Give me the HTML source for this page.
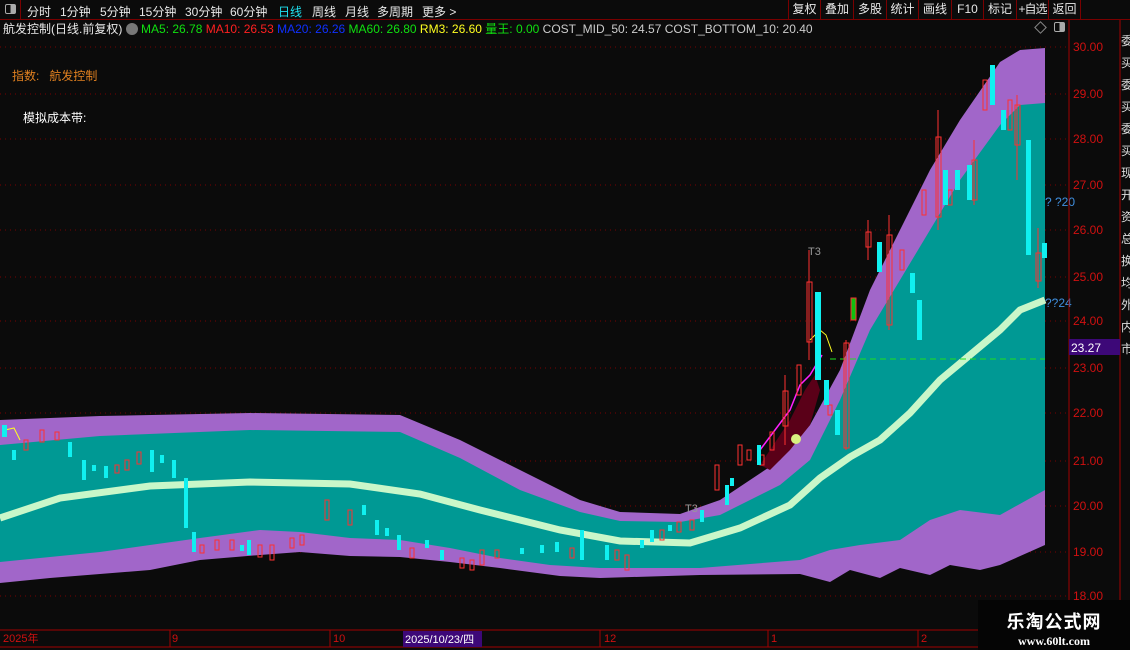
<!DOCTYPE html>
<html><head><meta charset="utf-8"><style>
*{margin:0;padding:0;box-sizing:border-box}
body{width:1130px;height:650px;background:#0b0b0b;overflow:hidden;position:relative;font-family:"Liberation Sans","Noto Sans CJK SC",sans-serif;color:#ddd}
.top{position:absolute;left:0;top:0;width:1130px;height:20px;border-bottom:1px solid #7a0000;font-size:12px}
.top span{position:absolute;top:3px;color:#e8e8e8;white-space:nowrap}
.btn{position:absolute;top:0;height:19px;border-left:1px solid #7a0000;color:#e8e8e8;font-size:12px;text-align:center;line-height:19px;white-space:nowrap;overflow:hidden}
.l2{position:absolute;top:20px;left:3px;font-size:12px;white-space:nowrap;line-height:18px}
</style></head><body>
<div class="top">
<div style="position:absolute;left:0;top:0;width:21px;height:19px;border-right:1px solid #7a0000"><div style="position:absolute;left:5px;top:4px;width:11px;height:10px;border:1px solid #aaa;border-radius:2px;background:linear-gradient(90deg,#0b0b0b 50%,#aaa 50%)"></div></div>
<span style="left:27px">分时</span><span style="left:60px">1分钟</span><span style="left:100px">5分钟</span><span style="left:139px">15分钟</span><span style="left:185px">30分钟</span><span style="left:230px">60分钟</span><span style="left:278px;color:#1ee0f0">日线</span><span style="left:312px">周线</span><span style="left:345px">月线</span><span style="left:377px">多周期</span><span style="left:422px">更多 &gt;</span>
<div class="btn" style="left:788px;width:32px">复权</div><div class="btn" style="left:820px;width:33px">叠加</div><div class="btn" style="left:853px;width:33px">多股</div><div class="btn" style="left:886px;width:32px">统计</div><div class="btn" style="left:918px;width:33px">画线</div><div class="btn" style="left:951px;width:32px">F10</div><div class="btn" style="left:983px;width:33px">标记</div><div class="btn" style="left:1016px;width:32px;letter-spacing:-1px">+自选</div><div class="btn" style="left:1048px;width:32px">返回</div><div class="btn" style="left:1080px;width:1px"></div>
</div>
<div class="l2"><span style="color:#e8e8e8">航发控制(日线.前复权)</span> <span style="display:inline-block;width:12px;height:12px;border-radius:6px;background:#777;vertical-align:-2px"></span> <span style="color:#10e010">MA5: 26.78</span> <span style="color:#ff2020">MA10: 26.53</span> <span style="color:#1030ff">MA20: 26.26</span> <span style="color:#10e010">MA60: 26.80</span> <span style="color:#ffff20">RM3: 26.60</span> <span style="color:#10e010">量王: 0.00</span> <span style="color:#ccc">COST_MID_50: 24.57 COST_BOTTOM_10: 20.40</span></div>
<div style="position:absolute;left:1036px;top:23px;width:9px;height:9px;border:1px solid #888;transform:rotate(45deg)"></div>
<div style="position:absolute;left:1054px;top:22px;width:11px;height:10px;border:1px solid #aaa;border-radius:2px;background:linear-gradient(90deg,#0b0b0b 50%,#aaa 50%)"></div>
<svg style="position:absolute;left:0;top:0" width="1130" height="650">
<g stroke="#7a0000" stroke-dasharray="1,4">
<line x1="0" y1="47" x2="1068" y2="47"/><line x1="0" y1="94" x2="1068" y2="94"/><line x1="0" y1="139" x2="1068" y2="139"/><line x1="0" y1="185" x2="1068" y2="185"/><line x1="0" y1="230" x2="1068" y2="230"/><line x1="0" y1="277" x2="1068" y2="277"/><line x1="0" y1="321" x2="1068" y2="321"/><line x1="0" y1="368" x2="1068" y2="368"/><line x1="0" y1="413" x2="1068" y2="413"/><line x1="0" y1="461" x2="1068" y2="461"/><line x1="0" y1="506" x2="1068" y2="506"/><line x1="0" y1="552" x2="1068" y2="552"/><line x1="0" y1="596" x2="1068" y2="596"/>
</g>
<polygon fill="#a166c9" points="0,420 100,416 250,413 400,415 460,440 520,470 580,500 620,512 680,514 720,500 780,460 810,425 840,370 870,290 900,230 930,170 960,120 1000,62 1020,50 1045,48 1045,545 1000,565 980,570 950,565 930,575 900,568 880,578 850,570 830,582 800,574 700,575 600,578 560,576 500,568 450,562 400,557 350,556 300,552 260,555 200,560 150,570 100,574 50,578 0,583"/>
<polygon fill="#009994" points="0,445 100,436 250,430 400,432 460,458 520,490 580,512 620,521 680,522 720,515 780,485 810,460 840,400 870,330 900,280 930,230 960,180 1000,125 1020,105 1045,103 1045,490 1000,515 960,510 930,520 900,540 860,545 830,550 800,560 700,568 600,568 550,565 500,558 450,548 400,540 350,538 300,532 260,530 200,538 150,545 100,552 50,557 0,562"/>
<polygon fill="#5a0018" points="760,465 790,420 805,390 815,375 820,390 810,425 790,450 770,470"/>
<polyline fill="none" stroke="#c9f7c9" stroke-width="7" points="0,518 60,498 150,486 250,482 350,484 420,494 480,510 560,530 620,541 690,543 740,528 790,505 820,478 850,457 880,440 910,413 940,380 970,355 1000,330 1020,310 1045,300"/>
<line x1="830" y1="359" x2="1045" y2="359" stroke="#20e020" stroke-dasharray="6,4"/>
<polyline fill="none" stroke="#ff20ff" stroke-width="1.5" points="760,450 775,430 790,410 800,385 810,375 822,355"/>
<polyline fill="none" stroke="#ffff20" points="810,340 820,330 826,335 832,352"/>
<polyline fill="none" stroke="#ffff20" points="5,430 14,428 20,440"/>
<g stroke="#ff3030" fill="none">
<rect x="783" y="391" width="5" height="35"/><line x1="785" y1="375" x2="785" y2="445"/>
<rect x="807" y="282" width="5" height="60"/><line x1="809" y1="250" x2="809" y2="360"/>
<rect x="844" y="343" width="5" height="105"/><line x1="846" y1="340" x2="846" y2="450"/>
<rect x="866" y="232" width="5" height="15"/><line x1="868" y1="220" x2="868" y2="260"/>
<rect x="887" y="235" width="5" height="90"/><line x1="889" y1="215" x2="889" y2="330"/>
<rect x="936" y="137" width="5" height="80"/><line x1="938" y1="110" x2="938" y2="230"/>
<rect x="972" y="160" width="5" height="40"/><line x1="974" y1="140" x2="974" y2="205"/>
<rect x="1015" y="105" width="5" height="40"/><line x1="1017" y1="95" x2="1017" y2="180"/>
<rect x="1036" y="253" width="5" height="28"/><line x1="1038" y1="228" x2="1038" y2="288"/>
<rect x="738" y="445" width="4" height="20"/><rect x="747" y="450" width="4" height="10"/><rect x="770" y="432" width="4" height="18"/>
<rect x="40" y="430" width="4" height="12"/><rect x="125" y="460" width="4" height="10"/><rect x="325" y="500" width="4" height="20"/><rect x="348" y="510" width="4" height="15"/><rect x="270" y="545" width="4" height="15"/><rect x="215" y="540" width="4" height="10"/><rect x="480" y="550" width="4" height="15"/><rect x="625" y="555" width="4" height="15"/><rect x="690" y="520" width="4" height="10"/><rect x="715" y="465" width="4" height="25"/>
<rect x="24" y="440" width="4" height="10"/><rect x="55" y="432" width="4" height="8"/><rect x="115" y="465" width="4" height="8"/><rect x="137" y="452" width="4" height="12"/><rect x="200" y="545" width="4" height="8"/><rect x="230" y="540" width="4" height="10"/><rect x="258" y="545" width="4" height="12"/><rect x="290" y="538" width="4" height="10"/><rect x="300" y="535" width="4" height="10"/><rect x="410" y="548" width="4" height="10"/><rect x="460" y="558" width="4" height="10"/><rect x="470" y="560" width="4" height="10"/><rect x="495" y="550" width="4" height="8"/><rect x="570" y="548" width="4" height="10"/><rect x="615" y="550" width="4" height="10"/><rect x="660" y="530" width="4" height="10"/><rect x="677" y="522" width="4" height="10"/><rect x="760" y="455" width="4" height="10"/><rect x="797" y="365" width="4" height="30"/><rect x="828" y="405" width="4" height="10"/><rect x="900" y="250" width="4" height="20"/><rect x="922" y="190" width="4" height="25"/><rect x="948" y="190" width="4" height="15"/><rect x="983" y="80" width="4" height="30"/><rect x="1008" y="100" width="4" height="30"/>
</g>
<g fill="#10f0f0">
<rect x="815" y="292" width="6" height="88"/><rect x="824" y="380" width="5" height="25"/><rect x="835" y="410" width="5" height="25"/><rect x="877" y="242" width="5" height="30"/><rect x="910" y="273" width="5" height="20"/><rect x="917" y="300" width="5" height="40"/><rect x="943" y="170" width="5" height="35"/><rect x="955" y="170" width="5" height="20"/><rect x="967" y="165" width="5" height="35"/><rect x="990" y="65" width="5" height="40"/><rect x="1001" y="110" width="5" height="20"/><rect x="1026" y="140" width="5" height="115"/><rect x="1042" y="243" width="5" height="15"/>
<rect x="2" y="425" width="5" height="12"/><rect x="68" y="442" width="4" height="15"/><rect x="82" y="460" width="4" height="20"/><rect x="104" y="466" width="4" height="12"/><rect x="150" y="450" width="4" height="22"/><rect x="172" y="460" width="4" height="18"/><rect x="184" y="478" width="4" height="50"/><rect x="192" y="532" width="4" height="20"/><rect x="247" y="540" width="4" height="15"/><rect x="375" y="520" width="4" height="15"/><rect x="397" y="535" width="4" height="15"/><rect x="440" y="550" width="4" height="10"/><rect x="580" y="530" width="4" height="30"/><rect x="605" y="545" width="4" height="15"/><rect x="650" y="530" width="4" height="12"/><rect x="700" y="510" width="4" height="12"/><rect x="725" y="485" width="4" height="20"/><rect x="757" y="445" width="4" height="20"/>
<rect x="12" y="450" width="4" height="10"/><rect x="92" y="465" width="4" height="6"/><rect x="160" y="455" width="4" height="8"/><rect x="240" y="545" width="4" height="6"/><rect x="362" y="505" width="4" height="10"/><rect x="385" y="528" width="4" height="8"/><rect x="425" y="540" width="4" height="8"/><rect x="520" y="548" width="4" height="6"/><rect x="540" y="545" width="4" height="8"/><rect x="555" y="542" width="4" height="10"/><rect x="640" y="540" width="4" height="8"/><rect x="668" y="525" width="4" height="6"/><rect x="730" y="478" width="4" height="8"/>
</g>
<rect x="851" y="298" width="5" height="22" fill="#10c010" stroke="#ff3030"/>
<circle cx="796" cy="439" r="5" fill="#d8f080"/>
<text x="808" y="255" fill="#999" font-size="11">T3</text>
<text x="685" y="512" fill="#999" font-size="11">T3</text>
<text x="1045" y="206" fill="#4090e0" font-size="12">? ?20</text>
<text x="1045" y="307" fill="#4090e0" font-size="12">??24</text>
<line x1="1069" y1="20" x2="1069" y2="630" stroke="#a00000"/>
<line x1="1120" y1="20" x2="1120" y2="630" stroke="#a00000"/>
<line x1="0" y1="630" x2="1130" y2="630" stroke="#a00000"/>
<line x1="0" y1="647" x2="1130" y2="647" stroke="#a00000"/>
<rect x="1069" y="339" width="51" height="16" fill="#3d0878"/>
<text x="1071" y="352" fill="#fff" font-size="12">23.27</text>
<g fill="#d01010" font-size="12">
<text x="1073" y="51">30.00</text><text x="1073" y="98">29.00</text><text x="1073" y="143">28.00</text><text x="1073" y="189">27.00</text><text x="1073" y="234">26.00</text><text x="1073" y="281">25.00</text><text x="1073" y="325">24.00</text><text x="1073" y="372">23.00</text><text x="1073" y="417">22.00</text><text x="1073" y="465">21.00</text><text x="1073" y="510">20.00</text><text x="1073" y="556">19.00</text><text x="1073" y="600">18.00</text>
</g>
<g fill="#d01010" font-size="11"><text x="3" y="642">2025年</text><text x="172" y="642">9</text><text x="333" y="642">10</text><text x="604" y="642">12</text><text x="771" y="642">1</text><text x="921" y="642">2</text></g>
<g stroke="#a00000"><line x1="170" y1="630" x2="170" y2="647"/><line x1="330" y1="630" x2="330" y2="647"/><line x1="600" y1="630" x2="600" y2="647"/><line x1="768" y1="630" x2="768" y2="647"/><line x1="918" y1="630" x2="918" y2="647"/></g>
<rect x="403" y="631" width="79" height="16" fill="#3d0878"/>
<text x="405" y="643" fill="#fff" font-size="11">2025/10/23/四</text>
</svg>
<div style="position:absolute;left:1121px;top:30px;width:9px;font-size:12px;color:#ddd;line-height:22px;overflow:hidden;height:400px">委买委买委买现开资总换均外内市</div>
<div style="position:absolute;left:12px;top:67px;font-size:12px;color:#e08020">指数:&nbsp;&nbsp;&nbsp;航发控制</div>
<div style="position:absolute;left:23px;top:109px;font-size:12px;color:#fff">模拟成本带:</div>
<div style="position:absolute;left:978px;top:600px;width:152px;height:50px;background:#050505;text-align:center">
<div style="font-size:18px;font-weight:bold;color:#fff;margin-top:8px;letter-spacing:1px">乐淘公式网</div>
<div style="font-family:'Liberation Serif',serif;font-size:12px;font-weight:bold;color:#fff">www.60lt.com</div></div>
</body></html>
